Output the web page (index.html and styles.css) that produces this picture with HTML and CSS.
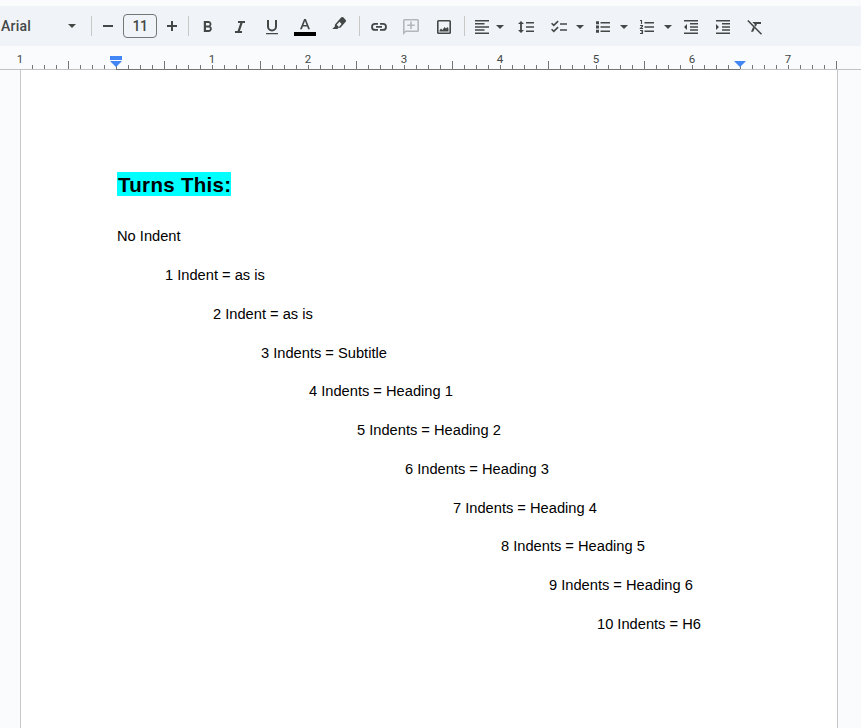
FILE: index.html
```
<!DOCTYPE html>
<html lang="en">
<head>
<meta charset="utf-8">
<title>Document</title>
<link rel="stylesheet" href="styles.css">
</head>
<body>
<div class="toolbar">
  <span class="font-name">Arial</span>
  <svg class="caret" viewBox="0 0 10 20"><path d="M1 8h8l-4 4z"/></svg>
  <span class="sep g14"></span>
  <svg class="tool g6" viewBox="0 0 20 20"><path d="M5 9h10v2H5z"/></svg>
  <span class="size">11</span>
  <svg class="tool g5" viewBox="0 0 20 20"><path d="M5 9h4V5h2v4h4v2h-4v4H9v-4H5z"/></svg>
  <span class="sep g6"></span>
  <svg class="tool g9" viewBox="0 0 20 20"><path fill-rule="evenodd" d="M5.800 5H10.500a3 3 0 0 1 2 5.200A3.200 3.200 0 0 1 11 16H5.800zM8 7v2.500h2.400a1.250 1.250 0 0 0 0-2.500zM8 11.500V14h2.700a1.250 1.250 0 0 0 0-2.500z"/></svg>
  <svg class="tool g12" viewBox="0 0 20 20"><path d="M8 5h7v2h-2.400L9.900 15H12v2H5v-2h2.600L10.300 7H8z"/></svg>
  <svg class="tool g12" viewBox="0 0 20 20"><path d="M5 4h2v6.500a3 3 0 0 0 6 0V4h2v6.500a5 5 0 0 1-10 0zM4 17h12v1.300H4z"/></svg>
  <svg class="tool color g13" viewBox="0 0 20 20"><path fill-rule="evenodd" d="M9.100 3h1.800L15 13.300h-1.900l-1-2.700H7.900l-1 2.700H5zM10 5L8.500 9.100h3z"/><path class="swatch" d="M-1 16h22v4H-1z"/></svg>
  <svg class="tool g14" viewBox="0 0 20 20"><path fill-rule="evenodd" d="M12.300 1.300Q13.200.6 14.200 1.300L16.800 3.900Q17.500 4.800 16.700 5.700L11.600 11.500Q10.700 12 9.700 11.600L8.500 12.900H3.300L6 10.300Q5.400 9.300 6.200 8.200zM7.700 8.800L9.900 11L12.600 7.900L10.500 5.700z"/></svg>
  <span class="sep g10"></span>
  <svg class="tool g9" viewBox="0 0 20 20"><path d="M9 7H6a3.900 3.900 0 0 0 0 7.800h3V13H6a2.100 2.100 0 0 1 0-4.200h3zM11 7h3a3.900 3.900 0 0 1 0 7.800h-3V13h3a2.100 2.100 0 0 0 0-4.200h-3zM7 10h6v1.700H7z"/></svg>
  <svg class="tool faded g12" viewBox="0 0 20 20"><path fill-rule="evenodd" d="M3.500 3h13q1.500 0 1.500 1.500v10q0 1.500-1.500 1.500H5L2 19V4.500Q2 3 3.500 3zM3.600 4.600v10.800l1-1h11.800V4.600zM9.200 5.500h1.600v3h3v1.600h-3v3H9.200v-3h-3V8.500h3z"/></svg>
  <svg class="tool g13" viewBox="0 0 20 20"><path fill-rule="evenodd" d="M4.500 4h11Q17 4 17 5.500v11q0 1.500-1.500 1.500h-11Q3 18 3 16.500v-11Q3 4 4.500 4zm.1 1.500v11h10.800v-11zM5.500 15.500v-1l1.500-2 1.500 1.500 2-3 1.500 1.500 1.500-1.500 1 1.500v3z"/></svg>
  <span class="sep g10"></span>
  <svg class="tool g7" viewBox="0 0 20 20"><path d="M3 4h14v1.500H3zM3 7h9.500v1.500H3zM3 10.200h14v1.500H3zM3 13.300h9.500v1.500H3zM3 16.500h14V18H3z"/></svg>
  <svg class="caret g3" viewBox="0 0 10 20"><path d="M1 9h8l-4 4z"/></svg>
  <svg class="tool g11" viewBox="0 0 20 20"><path d="M5 5l3 3H5.900v6H8l-3 3-3-3h2.100V8H2zM10 6h8v1.500h-8zM10 10.200h8v1.500h-8zM10 14.500h8V16h-8z"/></svg>
  <svg class="tool g13" viewBox="0 0 20 20"><path d="M11 7.200h7v1.600h-7zM11 13.200h7v1.600h-7z"/><path class="line" d="M2.600 7.200l2.200 2.200 4.300-4.300M2.600 13.200l2.200 2.200 4.300-4.300"/></svg>
  <svg class="caret g6" viewBox="0 0 10 20"><path d="M1 9h8l-4 4z"/></svg>
  <svg class="tool g8" viewBox="0 0 20 20"><path d="M3 5.300h3v3H3zM3 9.500h3v3H3zM3 13.700h3v3H3zM7.500 6H17v1.500H7.500zM7.500 10.200H17v1.500H7.500zM7.500 14.500H17V16H7.500z"/></svg>
  <svg class="caret g6" viewBox="0 0 10 20"><path d="M1 9h8l-4 4z"/></svg>
  <svg class="tool g8" viewBox="0 0 20 20"><path d="M7.500 6H17v1.500H7.500zM7.500 10.200H17v1.500H7.500zM7.500 14.500H17V16H7.500z"/><path class="thin" d="M3 4.500h1.500V8M3 9.500h2.500v.7L3.500 12.500H6M3 14.500h2.500v3H3M4 16h1.500"/></svg>
  <svg class="caret g6" viewBox="0 0 10 20"><path d="M1 9h8l-4 4z"/></svg>
  <svg class="tool g8" viewBox="0 0 20 20"><path d="M3 4h14v1.500H3zM9 7h8v1.500H9zM9 10.200h8v1.500H9zM9 13.300h8v1.500H9zM3 16.500h14V18H3zM6 8v6l-3-3z"/></svg>
  <svg class="tool g12" viewBox="0 0 20 20"><path d="M3 4h14v1.500H3zM9 7h8v1.500H9zM9 10.200h8v1.500H9zM9 13.300h8v1.500H9zM3 16.500h14V18H3zM3 8v6l3-3z"/></svg>
  <svg class="tool g12" viewBox="0 0 20 20"><path d="M7.300 6H16v2h-4l-1.200 2.700-1.500-1.500.5-1.200h-.5zM8.200 10.800L9.700 12.300l-1.500 3.500H6z"/><path class="line" d="M2.800 4.500L16.500 18.200"/></svg>
</div>

<div class="ruler">
  <svg class="ticks" viewBox="0 0 861 24">
    <defs>
      <pattern id="minor" x="20" width="12" height="24" patternUnits="userSpaceOnUse"><path d="M0 19h1v4H0z"/></pattern>
      <pattern id="half" x="68" width="96" height="24" patternUnits="userSpaceOnUse"><path d="M0 15h1v8H0z"/></pattern>
    </defs>
    <path class="margin-line" d="M0 23h861v1H0z"/>
    <path d="M116 23h624v1H116z"/>
    <rect x="21" width="816" height="24" fill="url(#minor)"/>
    <rect x="21" width="816" height="24" fill="url(#half)"/>
    <path class="marker" d="M110 10h12v4h-12zM110 15h12l-6 6zM734 15h12l-6 6z"/>
  </svg>
  <div class="labels"><span>1</span><span></span><span>1</span><span>2</span><span>3</span><span>4</span><span>5</span><span>6</span><span>7</span></div>
</div>

<main class="page">
  <h1><mark>Turns This:</mark></h1>
  <p>No Indent</p>
  <p class="i1">1 Indent = as is</p>
  <p class="i2">2 Indent = as is</p>
  <p class="i3">3 Indents = Subtitle</p>
  <p class="i4">4 Indents = Heading 1</p>
  <p class="i5">5 Indents = Heading 2</p>
  <p class="i6">6 Indents = Heading 3</p>
  <p class="i7">7 Indents = Heading 4</p>
  <p class="i8">8 Indents = Heading 5</p>
  <p class="i9">9 Indents = Heading 6</p>
  <p class="i10">10 Indents = H6</p>
</main>
</body>
</html>
```
FILE: styles.css
```
* { box-sizing: border-box; }
body {
  margin: 0;
  padding-top: 6px;
  height: 728px;
  overflow: hidden;
  background: #f9fbfd;
  font-family: "Liberation Sans", Arial, sans-serif;
}
.toolbar {
  display: flex;
  align-items: center;
  height: 40px;
  background: #f0f4f9;
  color: #444746;
  fill: #444746;
}
.toolbar > * { flex: none; }
.font-name {
  width: 66px;
  padding-left: 1px;
  font: 500 14px/20px Roboto, sans-serif;
  letter-spacing: 0.2px;
}
.caret { width: 10px; height: 20px; margin-left: 1px; }
.tool { width: 20px; height: 20px; }
.sep { width: 1px; height: 20px; background: #c7c7c7; }
.size {
  width: 34px;
  height: 24px;
  margin-left: 5px;
  border: 1px solid #747775;
  border-radius: 4px;
  text-align: center;
  font: 500 14px/22px Roboto, sans-serif;
  letter-spacing: -0.5px;
}
.color { overflow: visible; }
.swatch { fill: #000; }
.faded { fill: #b4b7ba; }
.line { fill: none; stroke: #444746; stroke-width: 1.6; }
.thin { fill: none; stroke: #444746; stroke-width: 1.1; }
.toolbar .g3 { margin-left: 3px; }
.toolbar .g5 { margin-left: 5px; }
.toolbar .g6 { margin-left: 6px; }
.toolbar .g7 { margin-left: 7px; }
.toolbar .g8 { margin-left: 8px; }
.toolbar .g9 { margin-left: 9px; }
.toolbar .g10 { margin-left: 10px; }
.toolbar .g11 { margin-left: 11px; }
.toolbar .g12 { margin-left: 12px; }
.toolbar .g13 { margin-left: 13px; }
.toolbar .g14 { margin-left: 14px; }

.ruler { display: grid; height: 24px; overflow: hidden; }
.ruler > * { grid-area: 1 / 1; }
.ticks { width: 861px; height: 24px; fill: #747775; }
.margin-line { fill: #c0c2c4; }
.marker { fill: #4285f4; }
.labels { display: flex; margin-left: -28px; }
.labels span {
  flex: 0 0 96px;
  text-align: center;
  font: 11.500px/26px Roboto, sans-serif;
  color: #444746;
}

.page {
  width: 818px;
  height: 660px;
  margin-left: 20px;
  padding: 102px 96px 0;
  border: solid #c7c7c7;
  border-width: 0 1px;
  background: #fff;
  color: #000;
}
h1 { margin: 0 0 28.400px; font-size: 20.500px; line-height: 26px; letter-spacing: 0.3px; }
mark { padding: 1px 0 0 1px; background: #0ff; color: #000; }
p { margin: 0 0 18.750px; font-size: 14.667px; line-height: 20px; white-space: nowrap; }
.i1 { padding-left: 48px; }
.i2 { padding-left: 96px; }
.i3 { padding-left: 144px; }
.i4 { padding-left: 192px; }
.i5 { padding-left: 240px; }
.i6 { padding-left: 288px; }
.i7 { padding-left: 336px; }
.i8 { padding-left: 384px; }
.i9 { padding-left: 432px; }
.i10 { padding-left: 480px; }
```
